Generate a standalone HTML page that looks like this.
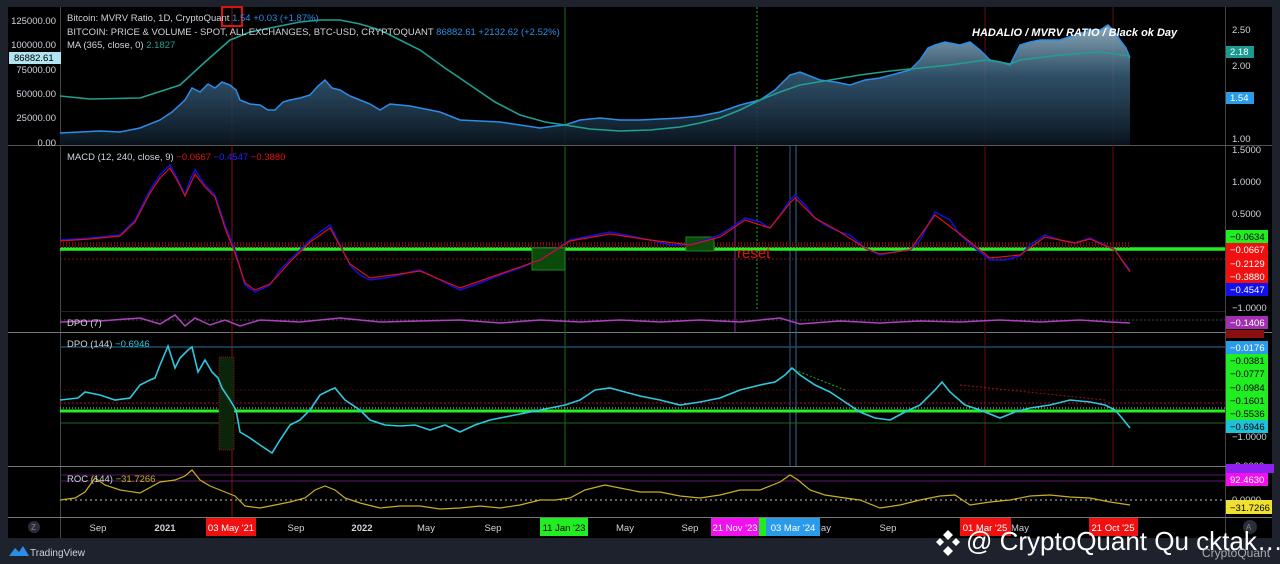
<!DOCTYPE html>
<html><head><meta charset="utf-8"><style>
html,body{margin:0;padding:0;background:#1e222d;width:1280px;height:564px;overflow:hidden;font-family:"Liberation Sans",sans-serif}
svg{display:block}
</style></head><body>
<svg width="1280" height="564" xmlns="http://www.w3.org/2000/svg" font-family="Liberation Sans, sans-serif">
<defs>
<linearGradient id="pg" x1="0" y1="20" x2="0" y2="145" gradientUnits="userSpaceOnUse">
<stop offset="0" stop-color="#a8c8d8" stop-opacity="0.9"/>
<stop offset="0.45" stop-color="#3a6280" stop-opacity="0.8"/>
<stop offset="1" stop-color="#0a1520" stop-opacity="0.9"/>
</linearGradient>
</defs>
<rect x="0" y="0" width="1280" height="564" fill="#1e222d"/>
<rect x="8" y="7" width="1264" height="531" fill="#000"/>
<line x1="60.5" y1="7" x2="60.5" y2="538" stroke="#444" />
<line x1="1225.5" y1="7" x2="1225.5" y2="538" stroke="#444"/>
<line x1="8" y1="145.5" x2="1272" y2="145.5" stroke="#555"/>
<line x1="60" y1="311.5" x2="1225" y2="311.5" stroke="#222"/>
<line x1="8" y1="332.5" x2="1272" y2="332.5" stroke="#777"/>
<line x1="8" y1="466.5" x2="1272" y2="466.5" stroke="#777"/>
<line x1="8" y1="517.5" x2="1272" y2="517.5" stroke="#777"/>

<line x1="232" y1="7" x2="232" y2="517" stroke="#8a0f0f"/>
<line x1="565" y1="7" x2="565" y2="466" stroke="#1c6b1c"/>
<line x1="757" y1="7" x2="757" y2="311" stroke="#1fae1f" stroke-dasharray="2,2"/>
<line x1="735" y1="145" x2="735" y2="332" stroke="#8a2ba0"/>
<line x1="790" y1="145" x2="790" y2="466" stroke="#2a5d8a"/>
<line x1="796" y1="145" x2="796" y2="466" stroke="#2a6ea0"/>
<line x1="985" y1="7" x2="985" y2="466" stroke="#6a0c0c"/>
<line x1="1113" y1="7" x2="1113" y2="466" stroke="#6a0c0c"/>
<rect x="222" y="7" width="20" height="19" fill="none" stroke="#e01010" stroke-width="2"/>

<path d="M60,133 L80,132 L100,131 L120,132 L140,128 L160,120 L172,112 L185,100 L192,88 L200,92 L208,84 L215,88 L222,82 L230,85 L236,90 L240,100 L250,104 L260,105 L268,110 L275,110 L283,102 L290,100 L300,98 L310,95 L318,86 L325,80 L332,88 L340,90 L350,96 L360,100 L370,104 L380,110 L390,104 L400,105 L410,106 L420,108 L430,110 L440,112 L450,116 L460,120 L480,121 L500,122 L520,125 L540,128 L555,126 L565,125 L580,120 L600,118 L620,120 L640,120 L660,119 L680,118 L700,116 L720,112 L740,105 L760,100 L775,90 L785,80 L790,75 L800,72 L820,80 L835,82 L850,85 L865,80 L880,78 L895,74 L910,70 L920,60 L928,48 L935,45 L945,42 L960,45 L970,42 L980,50 L990,60 L1000,62 L1010,65 L1015,55 L1020,45 L1030,42 L1040,40 L1060,40 L1075,35 L1090,30 L1100,30 L1108,25 L1115,32 L1120,40 L1126,48 L1130,58 L1130,145 L60,145 Z" fill="url(#pg)"/>
<path d="M60,133 L80,132 L100,131 L120,132 L140,128 L160,120 L172,112 L185,100 L192,88 L200,92 L208,84 L215,88 L222,82 L230,85 L236,90 L240,100 L250,104 L260,105 L268,110 L275,110 L283,102 L290,100 L300,98 L310,95 L318,86 L325,80 L332,88 L340,90 L350,96 L360,100 L370,104 L380,110 L390,104 L400,105 L410,106 L420,108 L430,110 L440,112 L450,116 L460,120 L480,121 L500,122 L520,125 L540,128 L555,126 L565,125 L580,120 L600,118 L620,120 L640,120 L660,119 L680,118 L700,116 L720,112 L740,105 L760,100 L775,90 L785,80 L790,75 L800,72 L820,80 L835,82 L850,85 L865,80 L880,78 L895,74 L910,70 L920,60 L928,48 L935,45 L945,42 L960,45 L970,42 L980,50 L990,60 L1000,62 L1010,65 L1015,55 L1020,45 L1030,42 L1040,40 L1060,40 L1075,35 L1090,30 L1100,30 L1108,25 L1115,32 L1120,40 L1126,48 L1130,58" fill="none" stroke="#2a8ee8" stroke-width="1.5"/>
<path d="M60,96 L90,99 L140,98 L180,85 L205,62 L230,40 L250,32 L270,28 L300,22 L320,20 L340,20 L360,24 L380,30 L400,40 L420,50 L445,68 L470,85 L495,102 L520,115 L545,122 L565,125 L590,129 L620,131 L650,130 L680,127 L700,123 L720,118 L740,110 L760,100 L780,92 L800,85 L830,80 L860,75 L890,71 L920,68 L950,65 L985,60 L1000,62 L1010,64 L1020,60 L1060,55 L1100,52 L1130,56" fill="none" stroke="#20a090" stroke-width="1.6"/>

<line x1="60" y1="249" x2="1225" y2="249" stroke="#22ee22" stroke-width="3.5"/>
<line x1="60" y1="259" x2="1225" y2="259" stroke="#8a1010" stroke-dasharray="2,2"/>
<path d="M60,245 L1130,245" stroke="#7a0a0a" stroke-width="6" stroke-dasharray="1,2"/>
<rect x="532" y="248" width="33" height="22" fill="#0c4a0c" stroke="#1a8a1a"/>
<rect x="686" y="237" width="28" height="14" fill="#0c4a0c" stroke="#1a8a1a"/>
<path d="M60,240 L90,238 L120,235 L135,220 L150,190 L160,175 L170,165 L178,180 L185,195 L190,180 L195,170 L205,185 L215,195 L225,225 L235,250 L245,285 L255,292 L270,285 L280,270 L290,260 L300,250 L310,240 L320,232 L330,225 L340,245 L350,265 L360,275 L370,280 L385,278 L400,275 L410,272 L420,270 L440,280 L460,290 L480,283 L500,275 L520,268 L540,260 L555,250 L570,240 L590,236 L610,232 L630,236 L650,240 L670,245 L690,245 L705,240 L720,235 L735,225 L745,218 L760,222 L770,228 L780,215 L790,200 L795,195 L805,205 L815,218 L825,225 L840,232 L850,235 L865,248 L880,255 L895,252 L910,250 L920,240 L935,212 L950,220 L960,235 L975,248 L990,260 L1005,260 L1020,256 L1030,245 L1045,235 L1060,240 L1075,243 L1090,238 L1105,245 L1115,250 L1122,260 L1130,270" fill="none" stroke="#1010e0" stroke-width="1.5"/>
<path d="M60,241 L90,239 L120,236 L135,222 L150,193 L160,178 L170,168 L178,182 L185,196 L195,174 L205,187 L215,197 L225,228 L235,253 L245,283 L255,290 L270,284 L290,262 L310,242 L330,228 L340,246 L350,264 L370,278 L400,274 L420,271 L460,288 L500,274 L540,260 L570,241 L610,234 L650,240 L690,245 L720,237 L745,220 L770,228 L790,203 L795,198 L815,218 L840,232 L865,248 L880,254 L910,250 L935,215 L960,234 L990,258 L1020,255 L1045,237 L1075,243 L1090,239 L1115,250 L1130,272" fill="none" stroke="#e01010" stroke-width="1.2"/>
<text x="737" y="258" fill="#e01010" font-size="15">reset</text>
<line x1="60" y1="320" x2="1225" y2="320" stroke="#444" stroke-dasharray="2,2"/>
<path d="M60,322 L100,321 L140,318 L160,324 L175,315 L185,326 L195,318 L210,325 L225,320 L240,326 L260,320 L300,322 L340,318 L380,322 L420,321 L460,320 L500,323 L540,320 L580,322 L620,320 L660,322 L700,320 L740,322 L780,318 L800,324 L840,321 L880,323 L920,321 L960,322 L1000,320 L1040,322 L1080,320 L1110,322 L1130,323" fill="none" stroke="#b040c0" stroke-width="1.5"/>
<line x1="60" y1="347" x2="1225" y2="347" stroke="#1e4a6a" stroke-width="1.5"/>
<line x1="60" y1="390" x2="1225" y2="390" stroke="#4a0a0a" stroke-dasharray="2,2"/>
<line x1="60" y1="403" x2="1225" y2="403" stroke="#a01030" stroke-dasharray="2,2"/>
<line x1="60" y1="408" x2="1225" y2="408" stroke="#ccc" stroke-dasharray="1,2"/>
<line x1="60" y1="411" x2="1225" y2="411" stroke="#22ee22" stroke-width="3"/>
<line x1="60" y1="423" x2="1225" y2="423" stroke="#1a6a1a"/>
<rect x="219" y="357" width="15" height="93" fill="#0a250a" stroke="#8a1010" stroke-dasharray="1,1"/>
<path d="M60,400 L78,398 L85,392 L100,395 L115,400 L130,398 L140,385 L150,380 L155,378 L160,365 L168,346 L175,368 L180,358 L188,350 L192,347 L198,372 L205,360 L212,372 L218,378 L222,388 L230,400 L236,410 L240,432 L250,438 L260,445 L272,453 L280,440 L290,425 L300,420 L310,410 L320,395 L330,390 L335,388 L345,400 L360,410 L370,420 L385,425 L400,426 L415,425 L430,430 L445,425 L460,432 L475,425 L490,420 L510,416 L530,412 L550,408 L565,405 L580,400 L595,390 L610,388 L625,392 L640,396 L660,400 L680,405 L700,402 L720,398 L740,390 L760,385 L775,382 L785,375 L792,368 L800,375 L815,385 L830,392 L845,402 L860,412 L875,418 L890,420 L905,412 L920,405 L935,390 L942,382 L950,392 L965,405 L980,410 L1000,418 L1015,412 L1030,408 L1050,405 L1070,400 L1090,402 L1105,405 L1115,410 L1122,418 L1130,428" fill="none" stroke="#30c8e0" stroke-width="1.6"/>
<path d="M795,370 L845,390" stroke="#22aa22" stroke-dasharray="2,2"/>
<path d="M960,385 L1105,400" stroke="#a01010" stroke-dasharray="2,2"/>
<line x1="60" y1="475" x2="1225" y2="475" stroke="#5a1a6a"/>
<line x1="60" y1="481" x2="1225" y2="481" stroke="#5a1a6a"/>
<line x1="60" y1="500" x2="1225" y2="500" stroke="#bbb" stroke-dasharray="2,3"/>
<path d="M60,500 L75,498 L85,492 L95,478 L105,485 L120,490 L140,493 L160,482 L175,480 L185,476 L192,470 L200,480 L210,486 L225,492 L235,496 L245,506 L260,508 L275,505 L290,502 L305,498 L315,490 L325,486 L335,490 L345,498 L360,503 L380,508 L400,506 L420,506 L440,509 L460,508 L480,506 L500,508 L520,505 L540,500 L555,500 L570,498 L585,490 L605,485 L620,488 L640,492 L660,492 L680,496 L700,498 L720,495 L740,490 L760,490 L780,482 L790,475 L798,480 L810,490 L825,495 L845,498 L860,500 L880,508 L900,505 L920,500 L940,496 L955,495 L970,505 L990,502 L1010,500 L1030,496 L1050,495 L1070,497 L1090,498 L1110,502 L1130,505" fill="none" stroke="#c8b020" stroke-width="1.2"/>

<g font-size="9.5" fill="#cfd3dc">
<text x="67" y="21">Bitcoin: MVRV Ratio, 1D, CryptoQuant <tspan fill="#2a8ee8">1.54  +0.03 (+1.87%)</tspan></text>
<text x="67" y="35">BITCOIN: PRICE &amp; VOLUME - SPOT, ALL EXCHANGES, BTC-USD, CRYPTOQUANT <tspan fill="#2a8ee8">86882.61  +2132.62 (+2.52%)</tspan></text>
<text x="67" y="48">MA (365, close, 0) <tspan fill="#20a090">2.1827</tspan></text>
<text x="67" y="160">MACD (12, 240, close, 9) <tspan fill="#e01010">−0.0667</tspan> <tspan fill="#2020ff">−0.4547</tspan> <tspan fill="#e01010">−0.3880</tspan></text>
<text x="67" y="326">DPO (7)</text>
<text x="67" y="347">DPO (144) <tspan fill="#30c8e0">−0.6946</tspan></text>
<text x="67" y="482">ROC (144) <tspan fill="#c8b020">−31.7266</tspan></text>
</g>
<text x="972" y="36" fill="#fff" font-size="11" font-weight="bold" font-style="italic">HADALIO / MVRV RATIO / Black ok Day</text>

<g font-size="9.5" fill="#cfd3dc" text-anchor="end">
<text x="56" y="24">125000.00</text><text x="56" y="48">100000.00</text><text x="56" y="73">75000.00</text><text x="56" y="97">50000.00</text><text x="56" y="121">25000.00</text><text x="56" y="146">0.00</text>
</g>
<rect x="9" y="52" width="52" height="12" fill="#b0e4f0"/>
<text x="14" y="61" font-size="9.5" fill="#000">86882.61</text>
<circle cx="34" cy="527" r="6" fill="#2a2e39"/><text x="31" y="530" font-size="8" fill="#888">Z</text>

<g font-size="9.5" fill="#cfd3dc">
<text x="1232" y="33">2.50</text><text x="1232" y="69">2.00</text><text x="1232" y="142">1.00</text>
<text x="1232" y="153">1.5000</text><text x="1232" y="185">1.0000</text><text x="1232" y="217">0.5000</text><text x="1232" y="311">−1.0000</text>
<text x="1232" y="440">−1.0000</text><text x="1232" y="469">-2.0000</text><text x="1232" y="503">0.0000</text>
</g>
<g font-size="9.5">
<rect x="1226" y="46" width="28" height="12" fill="#1a9a90"/><text x="1230" y="55" fill="#fff">2.18</text>
<rect x="1226" y="92" width="28" height="12" fill="#2a9be8"/><text x="1230" y="101" fill="#fff">1.54</text>
<rect x="1226" y="230" width="42" height="13" fill="#20ee20"/><text x="1230" y="240" fill="#000">−0.0634</text>
<rect x="1226" y="243" width="42" height="40" fill="#f01010"/><text x="1230" y="253" fill="#fff">−0.0667</text><text x="1230" y="267" fill="#fff">−0.2129</text><text x="1230" y="280" fill="#fff">−0.3880</text>
<rect x="1226" y="283" width="42" height="13" fill="#1010f0"/><text x="1230" y="293" fill="#fff">−0.4547</text>
<rect x="1226" y="316" width="42" height="13" fill="#a030b0"/><text x="1230" y="326" fill="#fff">−0.1406</text>
<rect x="1226" y="330" width="38" height="8" fill="#8a1010"/>
<rect x="1226" y="341" width="42" height="13" fill="#2a9be8"/><text x="1230" y="351" fill="#fff">−0.0176</text>
<rect x="1226" y="354" width="42" height="66" fill="#20ee20"/><text x="1230" y="364" fill="#000">−0.0381</text><text x="1230" y="377" fill="#000">−0.0777</text><text x="1230" y="391" fill="#000">−0.0984</text><text x="1230" y="404" fill="#000">−0.1601</text><text x="1230" y="417" fill="#000">−0.5536</text>
<rect x="1226" y="420" width="42" height="13" fill="#20c0d8"/><text x="1230" y="430" fill="#000">−0.6946</text>
<rect x="1226" y="464" width="48" height="9" fill="#9020f0"/>
<rect x="1226" y="473" width="42" height="13" fill="#f010f0"/><text x="1230" y="483" fill="#fff">92.4630</text>
<rect x="1226" y="500" width="46" height="14" fill="#f0e030"/><text x="1230" y="511" fill="#000">−31.7266</text>
</g>
<circle cx="1250" cy="527" r="7" fill="#2a2e39"/><text x="1246" y="530" font-size="8" fill="#888">A</text>

<g font-size="9.5" fill="#cfd3dc" text-anchor="middle">
<text x="98" y="531">Sep</text><text x="165" y="531" font-weight="bold">2021</text><text x="296" y="531">Sep</text><text x="362" y="531" font-weight="bold">2022</text><text x="426" y="531">May</text><text x="493" y="531">Sep</text><text x="625" y="531">May</text><text x="690" y="531">Sep</text><text x="822" y="531">May</text><text x="888" y="531">Sep</text><text x="1020" y="531">May</text>
</g>
<g font-size="9.5" text-anchor="middle">
<rect x="206" y="518" width="50" height="18" fill="#f01010"/><text x="231" y="531" fill="#fff">03 May '21</text>
<rect x="540" y="518" width="48" height="18" fill="#20ee20"/><text x="564" y="531" fill="#000">11 Jan '23</text>
<rect x="711" y="518" width="48" height="18" fill="#f010f0"/><text x="735" y="531" fill="#fff">21 Nov '23</text>
<rect x="759" y="518" width="7" height="18" fill="#20ee20"/>
<rect x="766" y="518" width="54" height="18" fill="#2a9be8"/><text x="793" y="531" fill="#fff">03 Mar '24</text>
<rect x="960" y="518" width="51" height="18" fill="#f01010"/><text x="985" y="531" fill="#fff">01 Mar '25</text>
<rect x="1089" y="518" width="49" height="18" fill="#f01010"/><text x="1113" y="531" fill="#fff">21 Oct '25</text>
</g>

<path d="M9,556 L15,548 L19,552 L23,546 L29,556 Z" fill="#2a8ee8"/>
<text x="30" y="556" font-size="10" fill="#cfd3dc">TradingView</text>
<g fill="#fff"><path d="M948,530 l5,5 -5,5 -5,-5z M940,538 l4,4 -4,4 -4,-4z M956,538 l4,4 -4,4 -4,-4z M948,546 l5,5 -5,5 -5,-5z"/></g>
<text x="966" y="550" font-size="26" fill="#fff">@ CryptoQuant Qu cktak…</text>
<text x="1202" y="557" font-size="12" fill="#aaa">CryptoQuant</text>
</svg>
</body></html>
